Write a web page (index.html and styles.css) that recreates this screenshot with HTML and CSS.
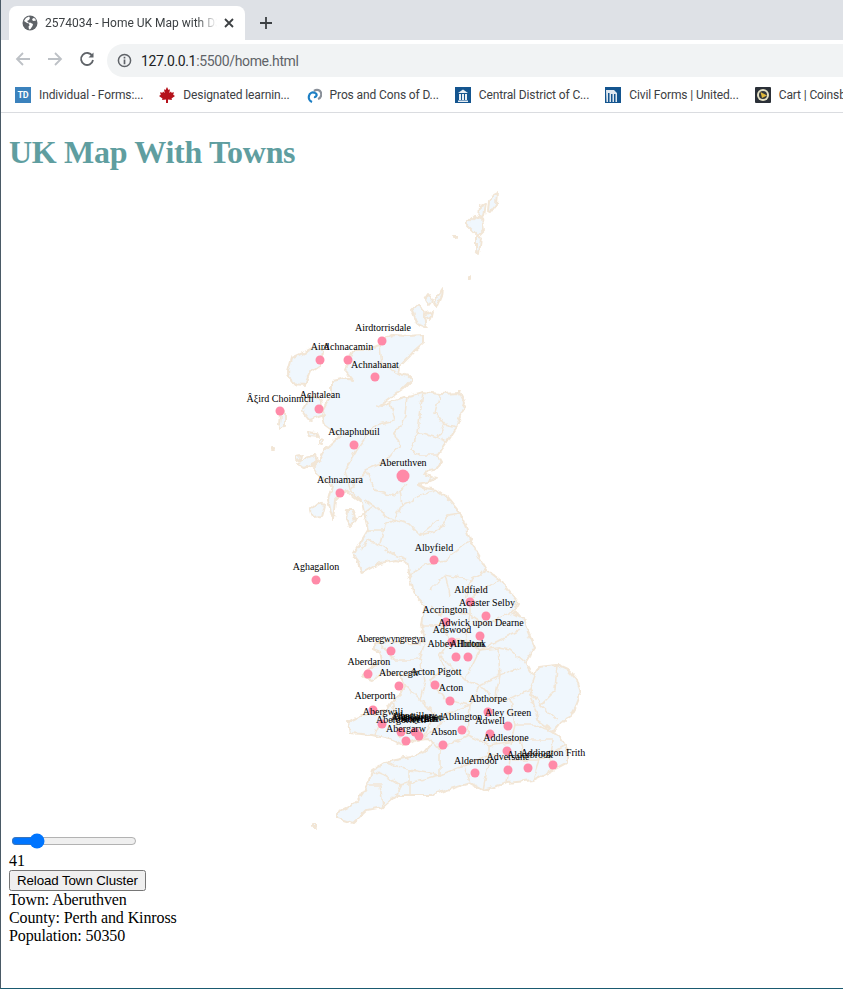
FILE: index.html
```html
<!DOCTYPE html>
<html lang="en">
<head>
  <meta charset="UTF-8" />
  <title>2574034 - Home UK Map with D3.js</title>
  <link rel="stylesheet" href="styles.css">
</head>
<body>
  <div class="window">
    <header class="browser">
      <div class="tabstrip">
        <div class="tab">
          <svg class="favicon" viewBox="0 0 16 16" width="16" height="16">
            <circle cx="8" cy="8" r="7.5" fill="#5f6368"/>
            <path d="M7 1.5 4 3 2 6l3 2 2 .5.5 2-1 1 .5 3 1.5-.5 2-3 .5-2-3-1.5-1 .5L5 6l2-1 1-2zM11 3l-1 2 1.500 1 2.500-.5-1-2z" fill="#fff"/>
          </svg>
          <span class="tab-title">2574034 - Home UK Map with D3.js</span>
          <svg class="tab-close" viewBox="0 0 10 10" width="10" height="10">
            <path d="M1 1l8 8M9 1L1 9" stroke="#3c4043" stroke-width="1.800" fill="none"/>
          </svg>
        </div>
        <svg class="new-tab" viewBox="0 0 12 12" width="12" height="12">
          <path d="M6 0v12M0 6h12" stroke="#3c4043" stroke-width="1.800" fill="none"/>
        </svg>
      </div>

      <div class="toolbar">
        <svg class="nav-icon" viewBox="0 0 16 16" width="16" height="16">
          <path d="M15 8H2M8 2 2 8l6 6" stroke="#bdc1c6" stroke-width="1.800" fill="none"/>
        </svg>
        <svg class="nav-icon" viewBox="0 0 16 16" width="16" height="16">
          <path d="M1 8h13M8 2l6 6-6 6" stroke="#bdc1c6" stroke-width="1.800" fill="none"/>
        </svg>
        <svg class="nav-icon" viewBox="0 0 16 16" width="16" height="16">
          <path d="M13.300 5A6 6 0 1 0 14 9" stroke="#5f6368" stroke-width="1.800" fill="none"/>
          <path d="M14.500 1.500v5h-5z" fill="#5f6368"/>
        </svg>
        <div class="omnibox">
          <svg class="info" viewBox="0 0 16 16" width="15" height="15">
            <circle cx="8" cy="8" r="6.500" stroke="#5f6368" stroke-width="1.600" fill="none"/>
            <path d="M8 7v5M8 4v1.800" stroke="#5f6368" stroke-width="1.800" fill="none"/>
          </svg>
          <span class="url"><span class="host">127.0.0.1</span>:5500/home.html</span>
        </div>
      </div>

      <nav class="bookmarks">
        <a class="bookmark">
          <span class="td-icon">TD</span>
          Individual - Forms:...
        </a>
        <a class="bookmark">
          <svg viewBox="0 0 16 16" width="16" height="16">
            <path d="M8 0 6.500 3 5 2.300 5.700 6 4 4.500 3.500 5.800 1 5.300l.8 2.500L0 9l3.500 2.500-.5 1.500 4-.5V16h2v-3.500l4 .5-.5-1.500L16 9l-1.800-1.200.8-2.500-2.500.5L12 4.500 10.300 6 11 2.300 9.500 3z" fill="#b5121b"/>
          </svg>
          Designated learnin...
        </a>
        <a class="bookmark">
          <svg viewBox="0 0 16 16" width="16" height="16">
            <path d="M8 4a5 5 0 0 1 6 0 5 5 0 0 1-2 8" stroke="#8a9099" stroke-width="2.200" fill="none"/>
            <path d="M9 6a4 4 0 0 0-6 3 5 5 0 0 0 3 6M9 6a2 2 0 0 1-1 4" stroke="#1d7fc4" stroke-width="2.200" fill="none"/>
          </svg>
          Pros and Cons of D...
        </a>
        <a class="bookmark">
          <svg viewBox="0 0 16 16" width="16" height="16">
            <rect width="16" height="16" fill="#14558f"/>
            <path d="M3 6 8 2.500 13 6zM4 7h2v6H4zM7 7h2v6H7zM10 7h2v6h-2zM3 13.500h10V15H3z" fill="#e8eef4"/>
          </svg>
          Central District of C...
        </a>
        <a class="bookmark">
          <svg viewBox="0 0 16 16" width="16" height="16">
            <rect width="16" height="16" fill="#14558f"/>
            <path d="M1 3h8l3 3v9h-1.500V7H9v8H7.500V7H6v8H4.500V6H3v9H1.500z" fill="#dfe8f0"/>
          </svg>
          Civil Forms | United...
        </a>
        <a class="bookmark">
          <svg viewBox="0 0 16 16" width="16" height="16">
            <rect width="16" height="16" rx="1" fill="#2b3038"/>
            <circle cx="8" cy="8" r="6" fill="#e4e0c4"/>
            <circle cx="8" cy="8" r="4" fill="#33363a"/>
            <path d="M5.500 5 12 8.500 7 11z" fill="#e0b93a"/>
          </svg>
          Cart | Coinsbuy
        </a>
      </nav>
    </header>

    <main class="page">
      <h1>UK Map With Towns</h1>

      <svg class="map" viewBox="9 193 826 638" width="826" height="638">
        <defs>
          <filter id="rough" x="-5%" y="-5%" width="110%" height="110%">
            <feTurbulence type="fractalNoise" baseFrequency="0.14" numOctaves="2" seed="4"/>
            <feDisplacementMap in="SourceGraphic" scale="6" xChannelSelector="R" yChannelSelector="G"/>
          </filter>
        </defs>
        <g class="outline">
          <g class="land">
            <path d="M380 346 386 338 393 335 408 336 423 335 423 343 415 350 408 358 400 366 398 373 408 376 412 380 404 388 392 396 380 405 377 407 390 402 407 396 423 392 440 394 460 393 465 403 461 415 456 428 447 442 438 455 442 462 437 468 428 470 425 475 437 478 428 482 417 484 425 488 437 490 448 498 460 513 465 525 470 540 477 553 487 570 500 580 508 590 518 602 512 612 523 618 528 632 535 648 530 655 525 663 530 672 535 675 538 667 557 665 568 670 577 680 581 693 576 706 570 717 558 725 553 731 560 737 565 745 568 753 568 762 553 770 533 780 507 783 483 790 470 783 447 790 432 795 410 795 397 795 383 807 367 810 353 823 337 818 337 813 347 808 357 802 368 785 372 770 385 762 410 757 425 752 433 742 428 738 420 739 403 745 393 740 372 735 350 733 348 722 362 715 385 712 392 702 400 695 405 685 400 676 385 672 372 680 362 676 370 668 382 662 380 652 372 648 378 642 395 641 415 645 425 640 421 625 425 605 415 595 410 577 407 562 395 560 380 563 362 573 354 553 368 530 362 503 355 498 345 490 335 500 333 520 328 500 332 485 318 475 313 467 320 460 325 450 340 436 325 425 322 412 332 393 332 381 345 378 353 380 345 370 353 350 365 350Z"/>
            <!-- islands -->
            <path d="M288 372 292 358 305 352 318 345 322 352 320 365 310 372 305 385 292 384Z"/>
            <path d="M302 410 312 395 320 398 324 415 310 420Z"/>
            <path d="M280 413 285 412 285 425 281 430 279 425Z"/>
            <path d="M297 465 305 458 315 455 318 462 305 468Z"/>
            <path d="M310 510 318 503 325 505 322 517 312 518Z"/>
            <path d="M347 510 352 510 356 520 350 527 346 520Z"/>
            <path d="M412 310 418 304 424 312 427 327 417 323Z"/>
            <path d="M425 300 429 294 432 300 428 305Z"/>
            <path d="M434 302 443 288 442 296 437 308Z"/>
            <path d="M424 315 432 312 430 320Z"/>
            <path d="M497 192 493 194 489 200 488 212 490 213 496 205Z"/>
            <path d="M480 206 486 203 484 216 479 218Z"/>
            <path d="M466 224 474 216 482 218 484 230 478 236 472 230Z"/>
            <path d="M476 236 481 238 479 254 476 250Z"/>
            <path d="M454 237h2v2h-2zM468 276h2v2h-2zM313 824h3v3h-3zM272 447h3v2h-3zM308 432l8 1 2 4-8-1zM319 439l4 1-1 4-3-1zM296 456l5-1-1 5-4 1z"/>
          </g>
          <g class="counties">
            <path d="M380 346 382 365 398 373"/>
            <path d="M407 396 405 415 395 435 400 445 385 462 366 470"/>
            <path d="M423 392 420 415 418 432 437 438 447 442"/>
            <path d="M418 432 410 450 420 455 438 455"/>
            <path d="M366 470 375 490 395 495 407 484"/>
            <path d="M400 490 402 505 422 495 437 490"/>
            <path d="M402 505 395 520 385 525 380 545 395 555 407 560"/>
            <path d="M395 520 410 525 420 535 440 530 448 515 460 513"/>
            <path d="M420 535 438 520"/>
            <path d="M365 500 385 515 395 520"/>
            <path d="M368 530 385 530"/>
            <path d="M380 545 368 540 360 550"/>
            <path d="M440 394 435 412 445 425 456 428"/>
            <path d="M437 438 445 425"/>
            <path d="M390 402 395 420 375 425 360 445"/>
            <path d="M360 445 345 470 350 490 362 503"/>
            <path d="M350 490 366 470"/>
            <path d="M355 520 375 505"/>
            <path d="M407 577 425 565 445 560 465 545 470 540"/>
            <path d="M430 590 445 575 470 580 487 570"/>
            <path d="M430 607 440 615 445 610 470 615 470 600 480 590 500 580"/>
            <path d="M445 575 450 595"/>
            <path d="M470 580 465 600"/>
            <path d="M470 615 485 625 512 612"/>
            <path d="M470 615 465 640 480 650 520 630"/>
            <path d="M421 625 440 625 450 640 440 655 445 670 430 680 445 700"/>
            <path d="M425 640 420 660 425 680 420 700 435 715 425 735"/>
            <path d="M450 640 465 640"/>
            <path d="M440 655 465 680 480 650"/>
            <path d="M480 650 498 648 500 675 520 668"/>
            <path d="M500 675 480 685"/>
            <path d="M525 663 510 650 498 648"/>
            <path d="M500 675 495 700 510 700 530 690 538 667"/>
            <path d="M557 665 555 690 540 705"/>
            <path d="M530 690 540 705 557 720"/>
            <path d="M530 690 538 720 553 731"/>
            <path d="M510 700 515 725 535 725 553 731"/>
            <path d="M515 725 510 745"/>
            <path d="M465 680 480 685 495 700"/>
            <path d="M445 700 470 705 480 685"/>
            <path d="M470 705 468 735 490 745 520 740 553 740"/>
            <path d="M420 739 435 730 445 715 470 705"/>
            <path d="M520 740 525 760"/>
            <path d="M553 740 550 765"/>
            <path d="M468 735 440 750 433 742"/>
            <path d="M440 750 440 775 410 770 410 795"/>
            <path d="M440 775 465 765 470 783"/>
            <path d="M465 765 490 755 510 760 540 760 565 745"/>
            <path d="M490 745 490 755 483 790"/>
            <path d="M510 760 507 783"/>
            <path d="M540 760 533 780"/>
            <path d="M410 770 385 762"/>
            <path d="M385 775 400 785 397 795"/>
            <path d="M400 785 420 780 440 775"/>
            <path d="M372 770 385 775"/>
            <path d="M383 807 380 785 368 785"/>
            <path d="M400 676 420 670"/>
            <path d="M405 685 420 700"/>
            <path d="M392 702 395 715 420 715"/>
            <path d="M385 712 375 735"/>
            <path d="M395 715 400 738"/>
            <path d="M378 642 395 660 420 660"/>
          </g>
        </g>
        <g class="dots">
          <circle cx="382" cy="341" r="4.500"/>
          <circle cx="320" cy="360" r="4.500"/>
          <circle cx="348" cy="360" r="4.500"/>
          <circle cx="375" cy="377" r="4.500"/>
          <circle cx="280" cy="411" r="4.500"/>
          <circle cx="319" cy="409" r="4.500"/>
          <circle cx="354" cy="445" r="4.500"/>
          <circle cx="403" cy="476" r="6.500"/>
          <circle cx="340" cy="493" r="4.500"/>
          <circle cx="434" cy="560" r="4.500"/>
          <circle cx="316" cy="580" r="4.500"/>
          <circle cx="470" cy="602" r="4.500"/>
          <circle cx="486" cy="616" r="4.500"/>
          <circle cx="446" cy="622" r="4.500"/>
          <circle cx="480" cy="636" r="4.500"/>
          <circle cx="452" cy="642" r="4.500"/>
          <circle cx="456" cy="657" r="4.500"/>
          <circle cx="468" cy="657" r="4.500"/>
          <circle cx="391" cy="651" r="4.500"/>
          <circle cx="368" cy="674" r="4.500"/>
          <circle cx="399" cy="686" r="4.500"/>
          <circle cx="435" cy="685" r="4.500"/>
          <circle cx="450" cy="701" r="4.500"/>
          <circle cx="373" cy="710" r="4.500"/>
          <circle cx="488" cy="712" r="4.500"/>
          <circle cx="382" cy="724" r="4.500"/>
          <circle cx="508" cy="726" r="4.500"/>
          <circle cx="462" cy="730" r="4.500"/>
          <circle cx="490" cy="734" r="4.500"/>
          <circle cx="401" cy="732" r="4.500"/>
          <circle cx="415" cy="732" r="4.500"/>
          <circle cx="419" cy="736" r="4.500"/>
          <circle cx="406" cy="741" r="4.500"/>
          <circle cx="443" cy="745" r="4.500"/>
          <circle cx="507" cy="751" r="4.500"/>
          <circle cx="508" cy="770" r="4.500"/>
          <circle cx="475" cy="773" r="4.500"/>
          <circle cx="553" cy="765" r="4.500"/>
          <circle cx="528" cy="768" r="4.500"/>
        </g>
        <g class="towns">
          <text x="383" y="331">Airdtorrisdale</text>
          <text x="320" y="350">Aird</text>
          <text x="348" y="350">Achnacamin</text>
          <text x="375" y="368">Achnahanat</text>
          <text x="280" y="402">Âξird Choinnich</text>
          <text x="320" y="398">Achtalean</text>
          <text x="354" y="435">Achaphubuil</text>
          <text x="403" y="466">Aberuthven</text>
          <text x="340" y="483">Achnamara</text>
          <text x="434" y="551">Albyfield</text>
          <text x="316" y="570">Aghagallon</text>
          <text x="471" y="593">Aldfield</text>
          <text x="487" y="606">Acaster Selby</text>
          <text x="445" y="613">Accrington</text>
          <text x="481" y="626">Adwick upon Dearne</text>
          <text x="452" y="633">Adswood</text>
          <text x="456" y="647">Abbey Hulton</text>
          <text x="468" y="647">Allbrook</text>
          <text class="tight" x="391" y="642">Aberegwyngregyn</text>
          <text x="369" y="665">Aberdaron</text>
          <text x="399" y="676">Abercegir</text>
          <text x="436" y="675">Acton Pigott</text>
          <text x="451" y="691">Acton</text>
          <text x="375" y="699">Aberporth</text>
          <text x="488" y="702">Abthorpe</text>
          <text x="383" y="715">Abergwili</text>
          <text x="508" y="716">Aley Green</text>
          <text x="462" y="720">Ablington</text>
          <text x="490" y="724">Adwell</text>
          <text x="401" y="723">Abergorlech</text>
          <text x="415" y="722">Abersychan</text>
          <text x="419" y="722">Abercarn</text>
          <text x="415" y="719">Abertillery</text>
          <text x="420" y="721">Abertridwr</text>
          <text x="417" y="720">Aberbargoed</text>
          <text x="406" y="732">Abergarw</text>
          <text x="444" y="735">Abson</text>
          <text x="506" y="741">Addlestone</text>
          <text x="508" y="760">Adversane</text>
          <text x="476" y="764">Aldermoor</text>
          <text x="553" y="756">Addington Frith</text>
          <text x="530" y="758">Alderbrook</text>
        </g>
      </svg>

      <input class="slider" type="range" min="0" max="250" value="41">
      <div>41</div>
      <button class="reload">Reload Town Cluster</button>
      <div>Town: Aberuthven</div>
      <div>County: Perth and Kinross</div>
      <div>Population: 50350</div>
    </main>
  </div>
</body>
</html>
```

FILE: styles.css
```css
html {
  overflow: hidden;
}
body {
  margin: 0;
  background: #fff;
}
.window {
  height: 989px;
  box-sizing: border-box;
  border-left: 1px solid #4a5a66;
  border-bottom: 1px solid #1a5a70;
  overflow: hidden;
}

/* browser chrome */
.browser {
  font-family: Roboto, sans-serif;
  font-size: 12px;
  color: #3c4043;
  border-bottom: 1px solid #dadce0;
}
.tabstrip {
  display: flex;
  align-items: center;
  height: 40px;
  box-sizing: border-box;
  padding: 6px 0 0 8px;
  background: #dee1e6;
}
.tab {
  display: flex;
  align-items: center;
  width: 236px;
  height: 34px;
  box-sizing: border-box;
  padding: 0 11px 0 13px;
  background: #fff;
  border-radius: 8px 8px 0 0;
}
.favicon {
  flex: none;
}
.tab-title {
  flex: 1;
  margin: 0 7px;
  overflow: hidden;
  white-space: nowrap;
  -webkit-mask-image: linear-gradient(to right, #000 88%, transparent);
  mask-image: linear-gradient(to right, #000 88%, transparent);
}
.tab-close {
  flex: none;
}
.new-tab {
  margin: 0 0 0 15px;
}
.toolbar {
  display: flex;
  align-items: center;
  gap: 16px;
  height: 37px;
  padding-left: 14px;
  background: #fff;
}
.omnibox {
  flex: 1;
  display: flex;
  align-items: center;
  height: 33px;
  margin: 4px 0 0 -4px;
  padding-left: 10px;
  background: #f1f3f4;
  border-radius: 17px 0 0 17px;
  font-size: 14px;
  letter-spacing: -0.35px;
  color: #5f6368;
}
.info {
  margin-right: 9px;
}
.host {
  color: #202124;
}
.bookmarks {
  display: flex;
  align-items: center;
  gap: 16px;
  height: 35px;
  padding-left: 14px;
  letter-spacing: -0.12px;
  white-space: nowrap;
  overflow: hidden;
}
.bookmark {
  display: flex;
  align-items: center;
  gap: 8px;
}
.td-icon {
  width: 16px;
  height: 16px;
  background: #3b82bd;
  color: #fff;
  font-size: 9px;
  font-weight: bold;
  line-height: 16px;
  text-align: center;
}

/* page */
.page {
  padding: 0 8px;
  font-family: "Liberation Serif", serif;
  font-size: 16px;
  letter-spacing: -0.1px;
  color: #000;
}
h1 {
  font-size: 32px;
  letter-spacing: -0.3px;
  color: cadetblue;
}
.map {
  display: block;
  overflow: visible;
}
.outline {
  filter: url(#rough);
}
.land path {
  fill: #f0f7fd;
  stroke: #f2e6d6;
  stroke-width: 2;
  stroke-linejoin: round;
}
.counties path {
  fill: none;
  stroke: #f2e6d6;
  stroke-width: 1.6;
}
.dots circle {
  fill: #ff8aa8;
}
.towns text {
  font-size: 10px;
  letter-spacing: 0;
  text-anchor: middle;
}
.towns .tight {
  letter-spacing: -0.4px;
}
.slider {
  display: block;
  width: 126px;
  margin: 2px 2px 3px;
}
.reload {
  font-family: "Liberation Sans", sans-serif;
  letter-spacing: -0.1px;
}
```
